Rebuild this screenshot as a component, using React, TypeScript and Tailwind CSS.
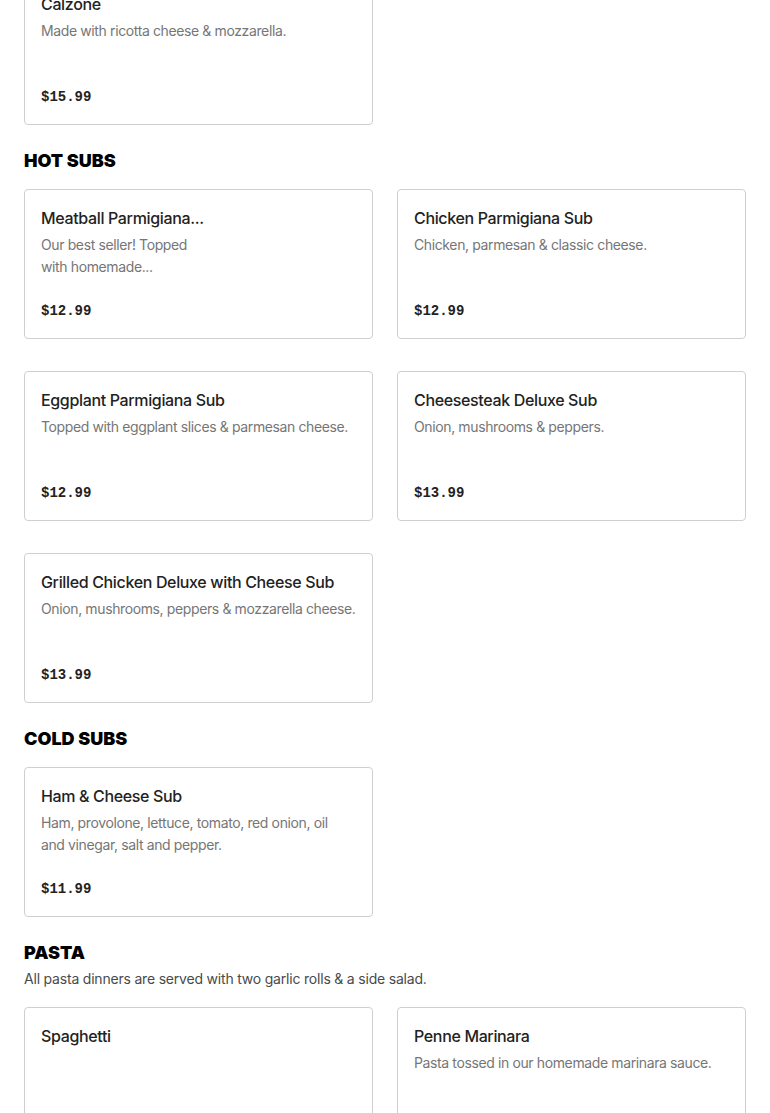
import React from "react";

type Item = {
    name: string;
    desc?: string;
    price?: string;
    descWidth?: string;
};

type Section = {
    title?: string;
    note?: string;
    items: Item[];
};

const sections: Section[] = [
    {
        items: [{ name: "Calzone", desc: "Made with ricotta cheese & mozzarella.", price: "$15.99" }],
    },
    {
        title: "HOT SUBS",
        items: [
            { name: "Meatball Parmigiana...", desc: "Our best seller! Topped with homemade...", price: "$12.99", descWidth: "w-[160px]" },
            { name: "Chicken Parmigiana Sub", desc: "Chicken, parmesan & classic cheese.", price: "$12.99" },
            { name: "Eggplant Parmigiana Sub", desc: "Topped with eggplant slices & parmesan cheese.", price: "$12.99" },
            { name: "Cheesesteak Deluxe Sub", desc: "Onion, mushrooms & peppers.", price: "$13.99" },
            { name: "Grilled Chicken Deluxe with Cheese Sub", desc: "Onion, mushrooms, peppers & mozzarella cheese.", price: "$13.99" },
        ],
    },
    {
        title: "COLD SUBS",
        items: [
            { name: "Ham & Cheese Sub", desc: "Ham, provolone, lettuce, tomato, red onion, oil and vinegar, salt and pepper.", price: "$11.99", descWidth: "w-[300px]" },
        ],
    },
    {
        title: "PASTA",
        note: "All pasta dinners are served with two garlic rolls & a side salad.",
        items: [
            { name: "Spaghetti", price: "$10.99" },
            { name: "Penne Marinara", desc: "Pasta tossed in our homemade marinara sauce.", price: "$10.99" },
        ],
    },
];

function MenuCard({ item }: { item: Item }) {
    return (
        <div className="flex h-[150px] flex-col rounded border border-[#cfcfcf] bg-white pt-4 pr-1 pb-[17px] pl-4">
            <div className="text-[16px] leading-6 font-medium tracking-[-0.35px] text-[#222]">{item.name}</div>
            {item.desc && (
                <div className={`mt-1 text-[14px] leading-[22px] tracking-[-0.38px] text-[#767676] ${item.descWidth ?? ""}`}>
                    {item.desc}
                </div>
            )}
            <div className="mt-auto font-['Liberation_Mono',monospace] text-[14px] leading-5 font-bold text-[#222]">
                {item.price}
            </div>
        </div>
    );
}

export default function App() {
    return (
        <div className="min-h-screen overflow-hidden bg-white font-['Inter',sans-serif]">
            <div className="-mt-[25px] px-6 pb-10">
                {sections.map((s, i) => (
                    <div key={i} className={i > 0 ? "mt-6" : ""}>
                        {s.title && (
                            <h2 className={`text-[18px] leading-6 font-black text-black ${s.note ? "" : "mb-4"}`}>{s.title}</h2>
                        )}
                        {s.note && (
                            <p className="mt-[3px] mb-[17px] text-[14px] leading-[22px] tracking-[-0.2px] text-[#4a4a4a]">{s.note}</p>
                        )}
                        <div className="grid grid-cols-2 gap-x-6 gap-y-8">
                            {s.items.map((it) => (
                                <MenuCard key={it.name} item={it} />
                            ))}
                        </div>
                    </div>
                ))}
            </div>
        </div>
    );
}
